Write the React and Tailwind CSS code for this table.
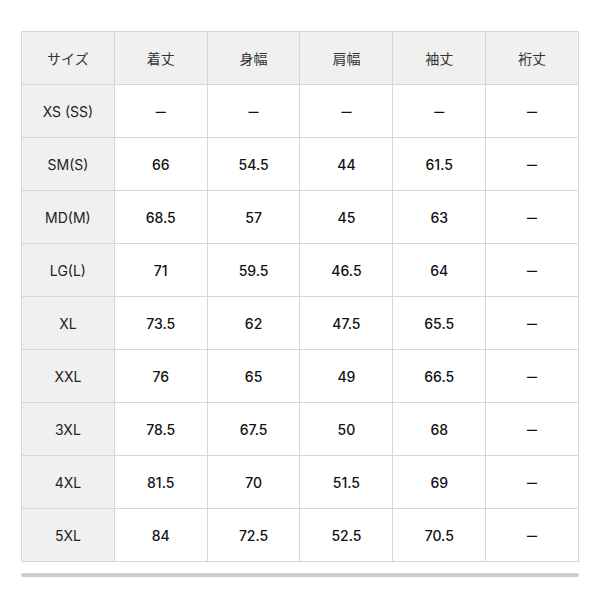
import React from 'react';

const headers = ['サイズ', '着丈', '身幅', '肩幅', '袖丈', '裄丈'];

const D = '－';

const rows = [
  ['XS (SS)', D, D, D, D, D],
  ['SM(S)', '66', '54.5', '44', '61.5', D],
  ['MD(M)', '68.5', '57', '45', '63', D],
  ['LG(L)', '71', '59.5', '46.5', '64', D],
  ['XL', '73.5', '62', '47.5', '65.5', D],
  ['XXL', '76', '65', '49', '66.5', D],
  ['3XL', '78.5', '67.5', '50', '68', D],
  ['4XL', '81.5', '70', '51.5', '69', D],
  ['5XL', '84', '72.5', '52.5', '70.5', D],
];

const App = () => {
  return (
    <div
      className="w-[600px] h-[600px] bg-white pt-[31px] pl-[21px]"
      style={{ fontFamily: 'Inter, "Noto Sans CJK JP", sans-serif' }}
    >
      <table className="w-[558px] table-fixed border-collapse text-[14px]">
        <thead>
          <tr className="h-[53px] bg-[#f0f0f0]">
            {headers.map((h) => (
              <th key={h} className="border border-[#d6d6d6] font-normal text-[#333]">
                {h}
              </th>
            ))}
          </tr>
        </thead>
        <tbody>
          {rows.map((r) => (
            <tr key={r[0]} className="h-[53px]">
              {r.map((c, i) => (
                <td
                  key={i}
                  className={
                    i === 0
                      ? 'border border-[#d6d6d6] bg-[#f0f0f0] text-center text-[#222]'
                      : 'border border-[#d6d6d6] text-center font-medium text-[#111]'
                  }
                >
                  {c}
                </td>
              ))}
            </tr>
          ))}
        </tbody>
      </table>

      {/* scrollbar */}
      <div className="mt-[11px] w-[558px] h-[4px] rounded-full bg-[#cccccc]"></div>
    </div>
  );
};

export default App;
